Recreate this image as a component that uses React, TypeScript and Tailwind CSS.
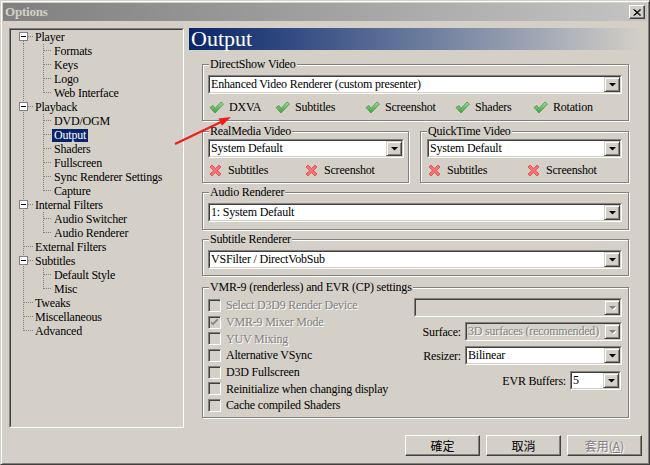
import type { ReactNode } from "react";
import clsx from "clsx";

type TreeItem = { label: string; level: 0 | 1; open?: boolean; first?: boolean; last?: boolean; selected?: boolean };

const tree: TreeItem[] = [
  { label: "Player", level: 0, open: true, first: true },
  { label: "Formats", level: 1 },
  { label: "Keys", level: 1 },
  { label: "Logo", level: 1 },
  { label: "Web Interface", level: 1, last: true },
  { label: "Playback", level: 0, open: true },
  { label: "DVD/OGM", level: 1 },
  { label: "Output", level: 1, selected: true },
  { label: "Shaders", level: 1 },
  { label: "Fullscreen", level: 1 },
  { label: "Sync Renderer Settings", level: 1 },
  { label: "Capture", level: 1, last: true },
  { label: "Internal Filters", level: 0, open: true },
  { label: "Audio Switcher", level: 1 },
  { label: "Audio Renderer", level: 1, last: true },
  { label: "External Filters", level: 0 },
  { label: "Subtitles", level: 0, open: true },
  { label: "Default Style", level: 1 },
  { label: "Misc", level: 1, last: true },
  { label: "Tweaks", level: 0 },
  { label: "Miscellaneous", level: 0 },
  { label: "Advanced", level: 0, last: true },
];

const disabledText = "text-[#808080] [text-shadow:1px_1px_0_#fff]";

// dotted connectors + expand box for one tree row
function TreeLines({ item }: { item: TreeItem }) {
  const dot = { stroke: "#808080", strokeWidth: 1, strokeDasharray: "1 1" };
  if (item.level === 0) {
    return (
      <svg width="22" height="14" className="shrink-0">
        <line x1="12.5" y1={item.first ? 7 : 0} x2="12.5" y2={item.last ? 7 : 14} {...dot} />
        <line x1={item.open ? 17 : 13} y1="6.5" x2="22" y2="6.5" {...dot} />
        {item.open && (
          <>
            <rect x="8.5" y="2.5" width="8" height="8" fill="#fff" stroke="#808080" />
            <line x1="10" y1="6.5" x2="15" y2="6.5" stroke="#000" />
          </>
        )}
      </svg>
    );
  }
  return (
    <svg width="41" height="14" className="shrink-0">
      <line x1="12.5" y1="0" x2="12.5" y2="14" {...dot} />
      <line x1="32.5" y1="0" x2="32.5" y2={item.last ? 7 : 14} {...dot} />
      <line x1="33" y1="6.5" x2="41" y2="6.5" {...dot} />
    </svg>
  );
}

function TreeView() {
  return (
    <div className="w-[175px] h-[400px] shrink-0 border border-t-[#808080] border-l-[#808080] border-r-white border-b-white">
      <div className="h-full border border-t-[#404040] border-l-[#404040] border-r-[#d4d0c8] border-b-[#d4d0c8]">
        {tree.map((item) => (
          <div key={item.label} className="flex h-[14px] items-center">
            <TreeLines item={item} />
            <span
              className={clsx(
                "px-[2px] leading-[13px] whitespace-nowrap",
                item.selected && "bg-[#0a246a] text-white"
              )}
            >
              {item.label}
            </span>
          </div>
        ))}
      </div>
    </div>
  );
}

function DropButton({ disabled }: { disabled?: boolean }) {
  return (
    <div className="flex w-[16px] h-full shrink-0 items-center justify-center bg-[#d4d0c8] border border-t-[#d4d0c8] border-l-[#d4d0c8] border-r-[#404040] border-b-[#404040] shadow-[inset_1px_1px_0_#fff,inset_-1px_-1px_0_#808080]">
      <svg width="7" height="4" viewBox="0 0 7 4">
        {disabled && <polygon points="1,1 8,1 4.5,4.5" fill="#fff" />}
        <polygon points="0,0 7,0 3.5,3.5" fill={disabled ? "#808080" : "#000"} />
      </svg>
    </div>
  );
}

function Combo({ value, className, disabled }: { value?: string; className?: string; disabled?: boolean }) {
  return (
    <div className={clsx("h-[19px] border border-t-[#808080] border-l-[#808080] border-r-white border-b-white", className)}>
      <div
        className={clsx(
          "flex h-full items-center border border-t-[#404040] border-l-[#404040] border-r-[#d4d0c8] border-b-[#d4d0c8]",
          disabled ? "bg-[#d4d0c8]" : "bg-white"
        )}
      >
        <span className={clsx("flex-1 min-w-0 truncate pl-[1px] leading-[15px]", disabled && disabledText)}>{value}</span>
        <DropButton disabled={disabled} />
      </div>
    </div>
  );
}

function Group({ label, className, children }: { label: string; className?: string; children: ReactNode }) {
  return (
    <div className={clsx("relative border border-[#808080] shadow-[inset_1px_1px_0_#fff,1px_1px_0_#fff]", className)}>
      <span className="absolute -top-[8px] left-[6px] px-[1px] bg-[#d4d0c8] leading-[14px] whitespace-nowrap">{label}</span>
      {children}
    </div>
  );
}

function CheckIcon() {
  return (
    <svg width="15" height="13" viewBox="0 0 15 13" className="shrink-0">
      <defs>
        <linearGradient id="gck" x1="0" y1="0" x2="0" y2="1">
          <stop offset="0" stopColor="#9be39b" />
          <stop offset="1" stopColor="#3f9f3f" />
        </linearGradient>
      </defs>
      <polygon points="1,6.5 4,4.5 6,7.5 12,1 14.5,3 6,12" fill="url(#gck)" stroke="#4b8f4b" strokeWidth="0.8" strokeLinejoin="round" />
    </svg>
  );
}

function CrossIcon() {
  return (
    <svg width="13" height="13" viewBox="0 0 13 13" className="shrink-0">
      <polygon
        points="1,3 3,1 6.5,4.5 10,1 12,3 8.5,6.5 12,10 10,12 6.5,8.5 3,12 1,10 4.5,6.5"
        fill="#f47272"
        stroke="#d94848"
        strokeWidth="0.8"
        strokeLinejoin="round"
      />
    </svg>
  );
}

function Status({ ok, label, className }: { ok: boolean; label: string; className?: string }) {
  return (
    <div className={clsx("flex items-center shrink-0", ok ? "gap-[5px]" : "gap-[6px]", className)}>
      {ok ? <CheckIcon /> : <CrossIcon />}
      <span className="leading-[14px] whitespace-nowrap">{label}</span>
    </div>
  );
}

function CheckBox({ label, checked, disabled }: { label: string; checked?: boolean; disabled?: boolean }) {
  return (
    <div className="flex h-[16.7px] items-center gap-[5px]">
      <div className="flex w-[13px] h-[13px] shrink-0 items-center justify-center bg-[#d4d0c8] border border-t-[#808080] border-l-[#808080] border-r-white border-b-white shadow-[inset_1px_1px_0_#404040]">
        {checked && (
          <svg width="7" height="7" viewBox="0 0 7 7">
            <polyline points="0,3 2,5 7,0" fill="none" stroke={disabled ? "#808080" : "#000"} strokeWidth="1.6" />
          </svg>
        )}
      </div>
      <span className={clsx("leading-[14px] whitespace-nowrap", disabled && disabledText)}>{label}</span>
    </div>
  );
}

function Button({ children, disabled }: { children: ReactNode; disabled?: boolean }) {
  return (
    <div className="flex w-[75px] h-[21px] items-center justify-center bg-[#d4d0c8] border border-t-white border-l-white border-r-[#404040] border-b-[#404040] shadow-[inset_-1px_-1px_0_#808080]">
      <span
        className={clsx(
          "font-['Noto_Sans_CJK_TC',sans-serif] text-[12px] leading-[14px] tracking-normal",
          disabled && disabledText
        )}
      >
        {children}
      </span>
    </div>
  );
}

export default function App() {
  return (
    <div className="relative w-[650px] h-[465px] overflow-hidden bg-[#d4d0c8] text-black text-[12px] tracking-[-0.2px] font-['Liberation_Serif','Noto_Sans_CJK_TC',serif] border border-t-[#d4d0c8] border-l-[#d4d0c8] border-r-[#404040] border-b-[#404040] shadow-[inset_1px_1px_0_#fff,inset_-1px_-1px_0_#808080]">
      {/* title bar */}
      <div className="flex h-[18px] mx-[2px] mt-[2px] items-center bg-linear-to-r from-[#808080] to-[#c4c4c4]">
        <span className="pl-[2px] font-bold text-[13px] leading-[16px] text-[#d4d0c8]">Options</span>
        <div className="ml-auto mr-[2px] flex w-[16px] h-[14px] items-center justify-center bg-[#d4d0c8] border border-t-white border-l-white border-r-[#404040] border-b-[#404040] shadow-[inset_-1px_-1px_0_#808080]">
          <svg width="8" height="7" viewBox="0 0 8 7">
            <path d="M0.5 0.5 L7 6.5 M1.5 0.5 L8 6.5 M7 0.5 L0.5 6.5 M8 0.5 L1.5 6.5" stroke="#000" strokeWidth="1" />
          </svg>
        </div>
      </div>

      <div className="flex mt-[7px] ml-[8px]">
        <TreeView />

        <div className="ml-[5px] w-[454px]">
          <div className="h-[22px] pl-[2px] bg-linear-to-r from-[#0a246a] to-[#d4d0c8]">
            <span className="text-[22px] leading-[22px] text-white tracking-normal">Output</span>
          </div>

          <div className="ml-[13px] w-[427px]">
            <Group label="DirectShow Video" className="mt-[14px] h-[57px] pt-[10px] pl-[5px] pr-[6px]">
              <Combo value="Enhanced Video Renderer (custom presenter)" />
              <div className="flex mt-[5px] h-[16px] pl-[1px]">
                <Status ok label="DXVA" className="w-[66px]" />
                <Status ok label="Subtitles" className="w-[90px]" />
                <Status ok label="Screenshot" className="w-[90px]" />
                <Status ok label="Shaders" className="w-[78px]" />
                <Status ok label="Rotation" />
              </div>
            </Group>

            <div className="flex mt-[10px] gap-[11px]">
              <Group label="RealMedia Video" className="w-[207px] h-[52px] pt-[7px] pl-[5px] pr-[4px]">
                <Combo value="System Default" />
                <div className="flex mt-[4px] h-[16px] pl-[1px]">
                  <Status ok={false} label="Subtitles" className="w-[96px]" />
                  <Status ok={false} label="Screenshot" />
                </div>
              </Group>
              <Group label="QuickTime Video" className="w-[209px] h-[52px] pt-[7px] pl-[6px] pr-[6px]">
                <Combo value="System Default" />
                <div className="flex mt-[4px] h-[16px] pl-[1px]">
                  <Status ok={false} label="Subtitles" className="w-[99px]" />
                  <Status ok={false} label="Screenshot" />
                </div>
              </Group>
            </div>

            <Group label="Audio Renderer" className="mt-[9px] h-[38px] pt-[10px] pl-[5px] pr-[6px]">
              <Combo value="1: System Default" />
            </Group>

            <Group label="Subtitle Renderer" className="mt-[9px] h-[37px] pt-[10px] pl-[5px] pr-[6px]">
              <Combo value="VSFilter / DirectVobSub" />
            </Group>

            <Group label="VMR-9 (renderless) and EVR (CP) settings" className="mt-[11px] h-[131px] pl-[5px] flex">
              <div className="w-[206px] mt-[9px]">
                <CheckBox label="Select D3D9 Render Device" disabled />
                <CheckBox label="VMR-9 Mixer Mode" checked disabled />
                <CheckBox label="YUV Mixing" disabled />
                <CheckBox label="Alternative VSync" />
                <CheckBox label="D3D Fullscreen" />
                <CheckBox label="Reinitialize when changing display" />
                <CheckBox label="Cache compiled Shaders" />
              </div>
              <div className="w-[208px] mt-[10px]">
                <Combo disabled />
                <div className="flex mt-[5px] items-center gap-[4px]">
                  <span className="w-[47px] text-right leading-[14px]">Surface:</span>
                  <Combo value="3D surfaces (recommended)" disabled className="w-[157px]" />
                </div>
                <div className="flex mt-[5px] items-center gap-[4px]">
                  <span className="w-[47px] text-right leading-[14px]">Resizer:</span>
                  <Combo value="Bilinear" className="w-[157px]" />
                </div>
                <div className="flex mt-[6px] items-center justify-end gap-[4px] pr-[1px]">
                  <span className="leading-[14px]">EVR Buffers:</span>
                  <Combo value="5" className="w-[51px]" />
                </div>
              </div>
            </Group>
          </div>
        </div>
      </div>

      <div className="flex mt-[7px] justify-end gap-[6px] pr-[7px]">
        <Button>確定</Button>
        <Button>取消</Button>
        <Button disabled>
          套用(<span className="underline">A</span>)
        </Button>
      </div>

      {/* red annotation arrow */}
      <svg className="absolute left-0 top-0 pointer-events-none" width="650" height="465">
        <line x1="174" y1="143" x2="220" y2="121" stroke="#f01c1c" strokeWidth="2" />
        <polygon points="230,116 217.5,117.6 220.9,124.8" fill="#f01c1c" />
      </svg>
    </div>
  );
}
